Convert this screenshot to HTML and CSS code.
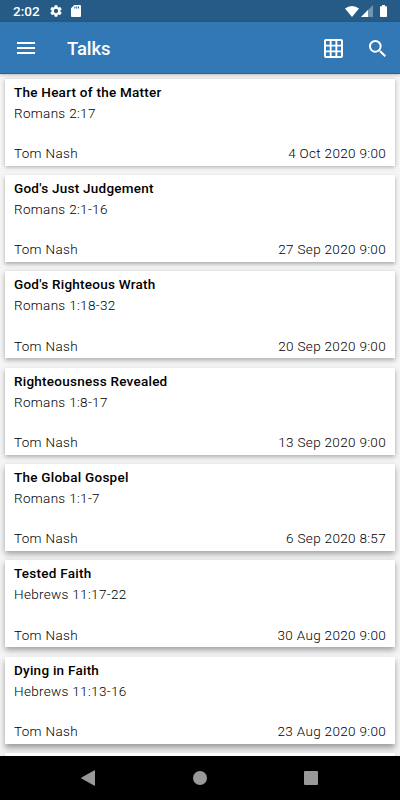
FILE: index.html
```html
<!DOCTYPE html>
<html lang="en">
<head>
<meta charset="utf-8">
<title>Talks</title>
<link rel="stylesheet" href="styles.css">
</head>
<body>
<div class="status">
  <span class="clock">2:02</span>
  <svg class="gear" viewBox="2 2 20 20"><path d="M19.14 12.94c.04-.3.06-.61.06-.94s-.02-.64-.07-.94l2.03-1.58a.49.49 0 0 0 .12-.61l-1.92-3.32a.49.49 0 0 0-.59-.22l-2.39.96a7 7 0 0 0-1.62-.94l-.36-2.54a.48.48 0 0 0-.48-.41h-3.84a.47.47 0 0 0-.47.41l-.36 2.54c-.59.24-1.13.57-1.62.94l-2.39-.96a.48.48 0 0 0-.59.22L2.74 8.87a.47.47 0 0 0 .12.61l2.03 1.58c-.05.3-.09.63-.09.94s.02.64.07.94l-2.03 1.58a.49.49 0 0 0-.12.61l1.92 3.32c.12.22.37.29.59.22l2.39-.96c.5.38 1.03.7 1.62.94l.36 2.54c.05.24.24.41.48.41h3.84c.24 0 .44-.17.47-.41l.36-2.54a7 7 0 0 0 1.62-.94l2.39.96c.22.08.47 0 .59-.22l1.92-3.32a.47.47 0 0 0-.12-.61zM12 15.6A3.6 3.6 0 1 1 12 8.4a3.6 3.6 0 0 1 0 7.2z"/></svg>
  <svg class="sd" viewBox="0 0 10 12"><path fill-rule="evenodd" d="M3.3 0H9a1 1 0 0 1 1 1v10a1 1 0 0 1-1 1H1a1 1 0 0 1-1-1V3.300zM3.400 1.500v2h1v-2zM5.200 1.500v2h1v-2zM7 1.500v2h1v-2z"/></svg>
  <svg class="wifi" viewBox="0 0 14 11"><path d="M7 11 0 2.600Q3 0 7 0t7 2.600z"/></svg>
  <svg class="cell" viewBox="0 0 12 12"><path opacity=".35" d="M12 0v12H0z"/><path d="M7 5v7H0z"/></svg>
  <svg class="battery" viewBox="0 0 7 12"><path d="M2 0h3v1.300h1.300q.7 0 .7.700v9.300q0 .7-.7.700H.700Q0 12 0 11.300V2q0-.7.700-.7H2z"/></svg>
</div>
<header class="bar">
  <svg class="menu" viewBox="0 0 18 12"><path d="M0 0h18v2H0zM0 5h18v2H0zM0 10h18v2H0z"/></svg>
  <h1>Talks</h1>
  <svg class="grid" viewBox="0 0 19 19"><path fill-rule="evenodd" d="M2 0h15a2 2 0 0 1 2 2v15a2 2 0 0 1-2 2H2a2 2 0 0 1-2-2V2a2 2 0 0 1 2-2zM2 2v3.700h3.700V2zM7.600 2v3.700h3.800V2zM13.300 2v3.700H17V2zM2 7.600v3.800h3.700V7.600zM7.600 7.600v3.800h3.800V7.600zM13.300 7.600v3.800H17V7.600zM2 13.300V17h3.700v-3.700zM7.600 13.300V17h3.800v-3.700zM13.300 13.300V17H17v-3.700z"/></svg>
  <svg class="search" viewBox="3 3 17.500 17.500"><path d="M15.500 14h-.79l-.28-.27A6.470 6.470 0 0 0 16 9.500 6.500 6.500 0 1 0 9.500 16c1.610 0 3.090-.59 4.230-1.570l.27.280v.79l5 4.990L20.490 19zm-6 0a4.500 4.500 0 1 1 0-9 4.500 4.500 0 0 1 0 9z"/></svg>
</header>
<main>
  <article class="card s1"><h2>The Heart of the Matter</h2><p>Romans 2:17</p><footer><span>Tom Nash</span><time>4 Oct 2020 9:00</time></footer></article>
  <article class="card s2"><h2>God's Just Judgement</h2><p>Romans 2:1-16</p><footer><span>Tom Nash</span><time>27 Sep 2020 9:00</time></footer></article>
  <article class="card s3"><h2>God's Righteous Wrath</h2><p>Romans 1:18-32</p><footer><span>Tom Nash</span><time>20 Sep 2020 9:00</time></footer></article>
  <article class="card s4"><h2>Righteousness Revealed</h2><p>Romans 1:8-17</p><footer><span>Tom Nash</span><time>13 Sep 2020 9:00</time></footer></article>
  <article class="card s5"><h2>The Global Gospel</h2><p>Romans 1:1-7</p><footer><span>Tom Nash</span><time>6 Sep 2020 8:57</time></footer></article>
  <article class="card s6"><h2>Tested Faith</h2><p>Hebrews 11:17-22</p><footer><span>Tom Nash</span><time>30 Aug 2020 9:00</time></footer></article>
  <article class="card s7"><h2>Dying in Faith</h2><p>Hebrews 11:13-16</p><footer><span>Tom Nash</span><time>23 Aug 2020 9:00</time></footer></article>
  <article class="card s7"></article>
</main>
<nav>
  <svg class="back" viewBox="0 0 14 16"><path d="M14 1v14q0 1-1 .5L.5 8.500Q0 8 .5 7.500L13 .5q1-.5 1 .5z"/></svg>
  <i class="home"></i>
  <i class="recent"></i>
</nav>
</body>
</html>
```
FILE: styles.css
```css
* { box-sizing: border-box; margin: 0; }
body {
  width: 400px; height: 800px; overflow: hidden;
  display: flex; flex-direction: column;
  font-family: Roboto, sans-serif; color: #000; background: #f5f5f5;
}
svg { display: block; fill: #fff; flex: none; }
.status {
  height: 22px; flex: none; background: #265b87; color: #fff;
  display: flex; align-items: center; padding: 0 13px 0 13px;
}
.clock { width: 37px; font-size: 13.500px; font-weight: 500; line-height: 22px; }
.gear { width: 12px; height: 12px; }
.sd { width: 10px; height: 12px; margin-left: 9px; }
.wifi { width: 14px; height: 11px; margin-left: auto; }
.cell { width: 12px; height: 12px; margin-left: 2px; }
.battery { width: 7px; height: 12px; margin-left: 7px; }
.bar {
  height: 52px; flex: none; background: #3178b5; color: #fff;
  border-bottom: 1px solid #1267aa; display: flex; align-items: center;
  padding: 1px 14px 0 17px; position: relative; z-index: 1;
  box-shadow: 0 1px 3px rgba(0,0,0,.25);
}
.menu { width: 18px; height: 12px; }
.bar h1 { font-size: 18.500px; font-weight: 500; margin: 1px 0 0 32px; letter-spacing: -.1px; }
.grid { width: 19px; height: 19px; margin-left: auto; }
.search { width: 17px; height: 17px; margin-left: 26px; }
main {
  flex: 1; min-height: 0; overflow: hidden; padding: 4.670px 5px 0;
  display: flex; flex-direction: column; gap: 9.330px;
}
.card {
  flex: none; height: 87px; padding: 3px 9px 0; background: #fff;
  display: flex; flex-direction: column;
  font-size: 13.500px; font-weight: 300; letter-spacing: .32px;
}
.card h2 { font-size: 13.500px; font-weight: 500; line-height: 20px; letter-spacing: .25px; }
.card p { line-height: 22px; }
.card footer { margin-top: 19.500px; display: flex; justify-content: space-between; line-height: 20px; }
.s1 { box-shadow: 0 1px 4px rgba(0,0,0,.3); }
.s2 { box-shadow: 0 1.500px 4px rgba(0,0,0,.31); }
.s3 { box-shadow: 0 2px 5px rgba(0,0,0,.32); }
.s4 { box-shadow: 0 2.300px 5px rgba(0,0,0,.34); }
.s5 { box-shadow: 0 2.700px 6px rgba(0,0,0,.35); }
.s6 { box-shadow: 0 3px 6px rgba(0,0,0,.36); }
.s7 { box-shadow: 0 4px 6px rgba(0,0,0,.37); }
nav {
  height: 44px; flex: none; background: #000; position: relative; z-index: 1;
  display: flex; align-items: center; padding: 0 82px 0 81px; justify-content: space-between;
}
.back { width: 14px; height: 16px; fill: #999; }
.home { width: 14px; height: 14px; border-radius: 50%; background: #999; }
.recent { width: 14px; height: 14px; border-radius: 1px; background: #999; }
```
